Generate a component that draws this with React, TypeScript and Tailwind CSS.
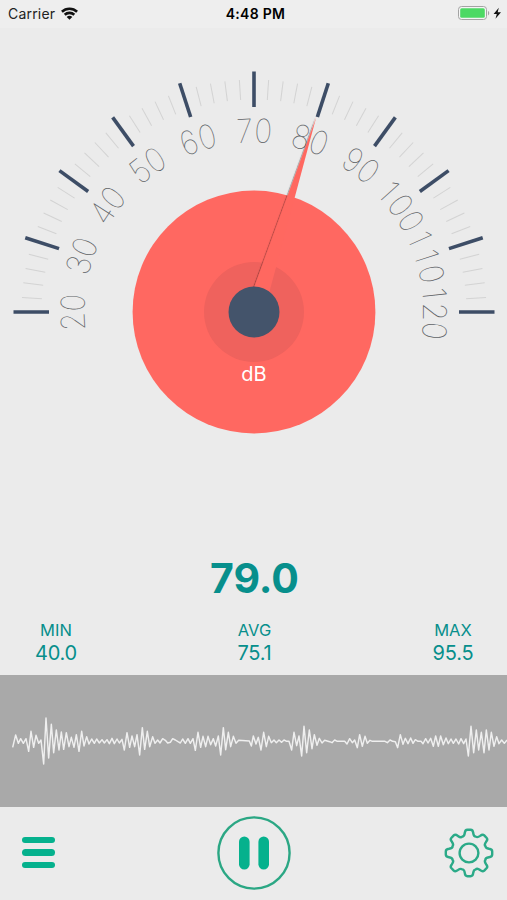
const CENTER_X = 254;
const CENTER_Y = 284;
const LABEL_STEP = 5.95;

const labels = ['20', '30', '40', '50', '60', '70', '80', '90', '100', '110', '120'];

const stats = [
  { label: 'MIN', value: '40.0' },
  { label: 'AVG', value: '75.1' },
  { label: 'MAX', value: '95.5' },
];

const wavePoints =
  '38,142 47,105 55,130 62,116 70,130 78,116 86,154 93,94 101,142 108,106 116,130 123,120 131,192 138,54 146,174 154,73 161,158 169,90 177,150 184,96 191,148 199,98 207,140 214,112 222,142 229,104 237,154 245,94 252,138 260,110 267,132 275,117 283,130 290,117 298,129 306,119 313,129 321,119 328,131 336,115 343,131 351,117 358,129 366,118 373,150 381,98 389,142 396,108 404,140 411,104 419,165 427,83 434,148 442,94 449,140 458,110 465,130 473,120 480,129 488,116 496,121 503,129 511,127 518,116 526,120 534,125 541,129 548,117 556,130 564,116 571,130 579,116 586,151 594,97 602,142 609,109 617,140 624,109 632,134 640,116 647,138 655,108 662,165 670,83 677,149 685,97 692,140 700,109 708,130 716,121 748,123 754,138 760,108 768,132 775,112 783,150 791,97 799,140 806,109 814,128 822,120 829,128 837,120 845,127 852,120 860,124 867,124 875,150 882,97 890,137 897,108 905,168 912,79 920,158 928,90 936,146 943,104 951,136 958,115 966,129 974,121 989,125 996,128 1004,120 1012,124 1034,124 1041,132 1049,116 1057,128 1064,120 1072,143 1079,104 1087,139 1095,109 1102,130 1110,121 1117,124 1155,124 1162,128 1170,120 1178,124 1186,125 1193,143 1201,104 1209,133 1216,115 1224,131 1232,114 1239,130 1246,119 1254,124 1263,124 1269,131 1277,116 1284,129 1292,115 1300,139 1307,108 1315,139 1322,108 1330,134 1338,114 1345,131 1353,117 1360,130 1368,117 1376,132 1383,116 1391,131 1398,117 1405,168 1413,79 1421,158 1429,90 1436,150 1444,97 1452,158 1459,90 1467,150 1474,97 1482,139 1490,110 1497,131 1505,120 1513,130 1521,120';

// One tooth pointing up, repeated eight times around the centre
const tooth = [
  [-4.9, -16.6], [-4.5, -18], [-4.2, -20],
  [-4, -22.2], [-3.2, -23.2], [-1.6, -23.2],
  [0, -23.2], [0, -23.2], [1.6, -23.2],
  [3.2, -23.2], [4, -22.2], [4.2, -20],
  [4.5, -18], [4.7, -16.4], [6.8, -16.4],
];

function gearPath() {
  let d = 'M-6.8 -16.4';
  for (let i = 0; i < 8; i++) {
    const a = (i * Math.PI) / 4;
    const pts = tooth.map(([x, y]) => {
      const px = x * Math.cos(a) - y * Math.sin(a);
      const py = x * Math.sin(a) + y * Math.cos(a);
      return `${px.toFixed(2)} ${py.toFixed(2)}`;
    });
    for (let j = 0; j < pts.length; j += 3) {
      d += `C${pts[j]} ${pts[j + 1]} ${pts[j + 2]}`;
    }
  }
  return d + 'Z';
}

function StatusBar() {
  return (
    <header className="grid h-7 grid-cols-3 items-center bg-[#eeeeee] pl-2 pr-1 text-[#222]">
      <div className="flex items-center gap-1.5">
        <span className="text-sm tracking-[0.2px]">Carrier</span>
        <svg className="-mt-0.5" width="17" height="13" viewBox="0 0 17 13" fill="none" stroke="#111" strokeWidth="2.6">
          <path d="M.9 4.7C5.1.7 11.9.7 16.1 4.7" />
          <path d="M3.7 7.7c2.7-2.5 6.9-2.5 9.6 0" />
          <path d="M8.5 12.7 5.7 9.9c1.6-1.4 4-1.4 5.6 0Z" fill="#111" stroke="none" />
        </svg>
      </div>
      <span className="text-center text-sm font-semibold tracking-[0.3px] text-black">4:48 PM</span>
      <div className="mb-0.5 flex justify-end">
        <svg width="45" height="16" viewBox="0 0 45 16">
          <rect x="0.5" y="1.5" width="28" height="13" rx="3" fill="#f4f4f4" stroke="#a3a3a3" />
          <rect x="2.2" y="3.2" width="24.6" height="9.6" rx="1.5" fill="#4cd964" />
          <path d="M30 6v4.4c1.6-.6 1.6-3.8 0-4.4Z" fill="#a3a3a3" />
          <path d="M40.8 2.8 35.6 9h3.2l-1.3 4.7L43 7.2h-3.3Z" fill="#111" />
        </svg>
      </div>
    </header>
  );
}

function Gauge() {
  const ticks = Array.from({ length: 51 }, (_, i) => i);

  return (
    <svg className="block" width="507" height="420" viewBox="0 0 507 420">
      <defs>
        <filter id="needleShadow" x="-30%" y="-10%" width="160%" height="120%">
          <feDropShadow dx="-1.1" dy="0" stdDeviation="0.7" floodColor="#000" floodOpacity="0.32" />
        </filter>
      </defs>
      <g transform={`translate(${CENTER_X} ${CENTER_Y})`}>
        {ticks.map(i => {
          const major = i % 5 === 0;
          return (
            <line
              key={i}
              y1={major ? -240.5 : -232.5}
              y2={major ? -205 : -212.5}
              stroke={major ? '#3d4d66' : '#d3d3d3'}
              strokeWidth={major ? 3.6 : 1}
              transform={`rotate(${i * 3.6 - 90})`}
            />
          );
        })}
        {labels.map((label, i) =>
          label.split('').map((char, j) => (
            <text
              key={`${label}-${j}`}
              className="font-['Inter'] font-thin"
              y={-169.5}
              fontSize="33"
              fill="#5f6367"
              textAnchor="middle"
              transform={`rotate(${i * 18 - 90 + (j - (label.length - 1) / 2) * LABEL_STEP}) scale(0.92 1)`}
            >
              {char}
            </text>
          ))
        )}
        <circle r="121.4" fill="#ff6861" />
        <circle r="50" fill="#ef625d" />
        <path d="M62.3 -195 9.2 3 -10 3Z" fill="#ff6861" filter="url(#needleShadow)" />
        <circle r="25.5" fill="#44546b" />
        <text y="69" fontSize="20" fill="#fff" textAnchor="middle">dB</text>
      </g>
    </svg>
  );
}

export default function App() {
  return (
    <div className="flex h-[900px] w-[507px] flex-col overflow-hidden bg-[#ebebeb] font-['Inter',sans-serif]">
      <StatusBar />
      <main className="flex flex-1 flex-col">
        <Gauge />
        <section className="mt-auto text-[#078f8c]">
          <p className="pl-0.5 text-center text-[41px] font-bold leading-[48px]">79.0</p>
          <div className="mt-4 flex justify-between pb-2.5 pl-[26px] pr-6">
            {stats.map(stat => (
              <div key={stat.label} className="w-[60px] text-center">
                <div className="text-[16.5px] leading-6">{stat.label}</div>
                <div className="text-xl leading-[23px] tracking-[-0.2px]">{stat.value}</div>
              </div>
            ))}
          </div>
        </section>
      </main>
      <section className="h-[132px] bg-[#a9a9a9]">
        <svg className="block" width="507" height="132" viewBox="0 0 1521 396">
          <polyline
            points={wavePoints}
            transform="translate(0 75)"
            fill="none"
            stroke="#efefef"
            strokeWidth="4.4"
            strokeLinejoin="round"
          />
        </svg>
      </section>
      <footer className="grid h-[93px] grid-cols-3 items-center pb-px pl-[22px] pr-[13px]">
        <button className="mb-px flex flex-col gap-[6.5px]" aria-label="Menu">
          <span className="h-[6.2px] w-[33px] rounded-full bg-[#05b18d]" />
          <span className="h-[6.2px] w-[33px] rounded-full bg-[#05b18d]" />
          <span className="h-[6.2px] w-[33px] rounded-full bg-[#05b18d]" />
        </button>
        <button className="-ml-[7px] justify-self-center" aria-label="Pause">
          <svg width="74" height="74" viewBox="0 0 74 74">
            <circle cx="37" cy="37" r="35.6" fill="none" stroke="#2ba784" strokeWidth="2.4" />
            <rect x="22" y="20.5" width="10.6" height="33" rx="5.3" fill="#05b18d" />
            <rect x="41.4" y="20.5" width="10.6" height="33" rx="5.3" fill="#05b18d" />
          </svg>
        </button>
        <button className="justify-self-end" aria-label="Settings">
          <svg width="50" height="50" viewBox="-25 -25 50 50" fill="none" stroke="#2baa88" strokeWidth="2.4" strokeLinejoin="round">
            <path d={gearPath()} />
            <circle r="9.4" />
          </svg>
        </button>
      </footer>
    </div>
  );
}
